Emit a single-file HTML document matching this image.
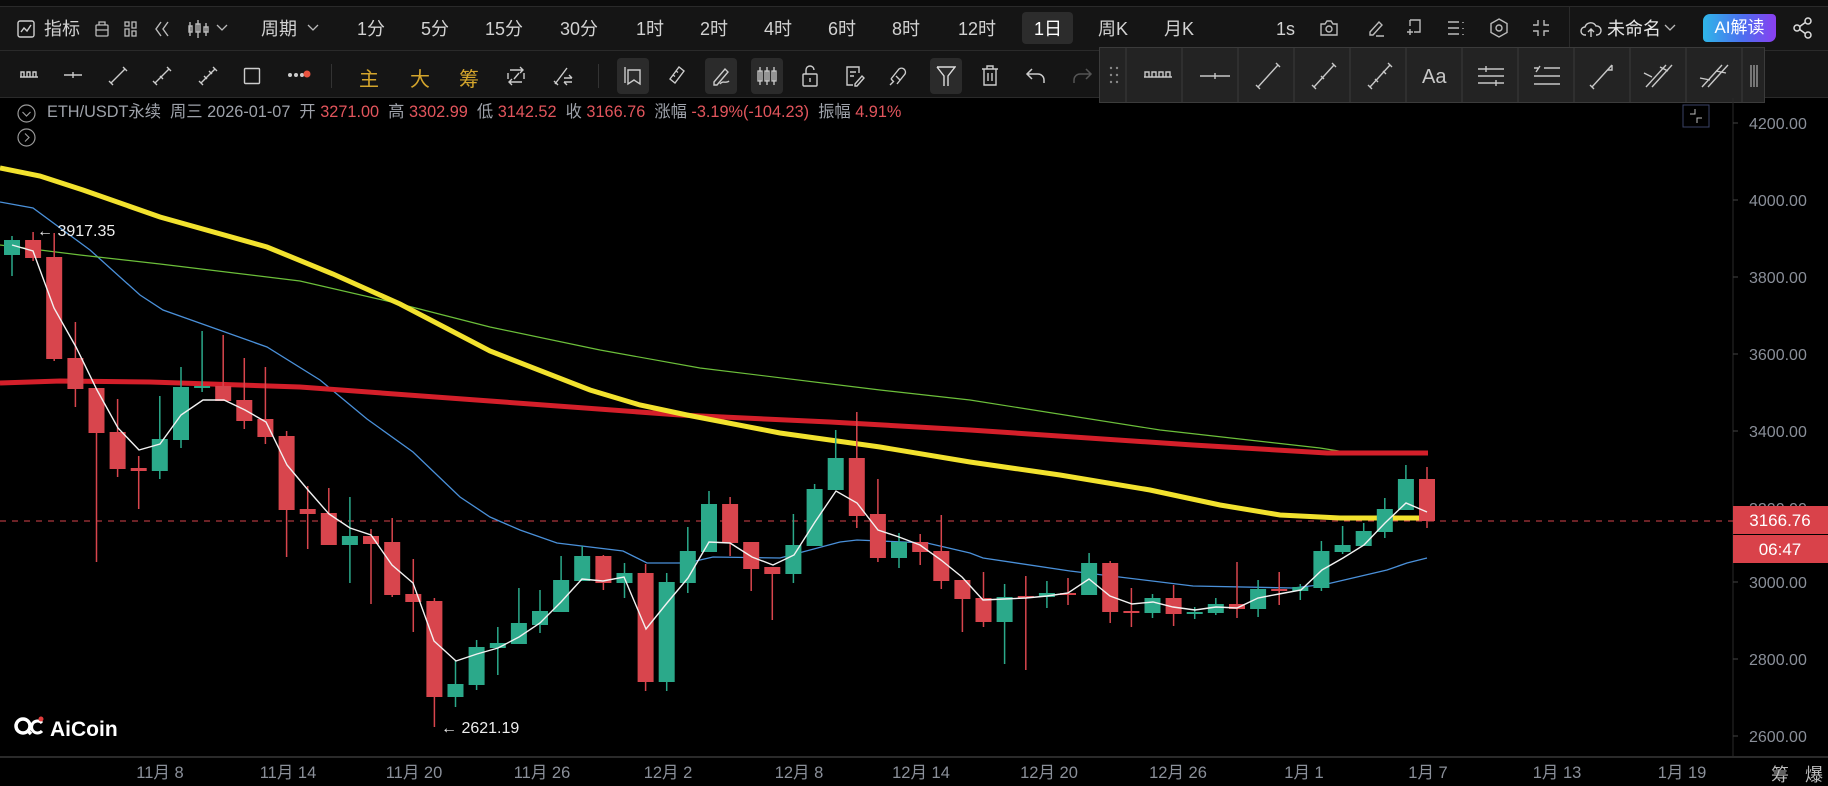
<!DOCTYPE html>
<html><head><meta charset="utf-8"><style>
*{margin:0;padding:0;box-sizing:border-box}
body{width:1828px;height:786px;background:#000;overflow:hidden;font-family:"Liberation Sans","Noto Sans CJK SC",sans-serif;position:relative;color:#d6d6d6}
.a{position:absolute;white-space:nowrap}
.t1{top:17px;font-size:18px;color:#d2d2d2;line-height:24px}
.ic{position:absolute}
</style></head><body>
<div class="a" style="left:0;top:0;width:1828px;height:6px;background:#0c0c0c"></div>
<div class="a" style="left:0;top:6px;width:1828px;height:91px;background:#151515;border-top:1px solid #2a2a2a"></div>
<div class="a" style="left:0;top:50px;width:1828px;height:1px;background:#2a2a2a"></div>
<div class="a" style="left:0;top:97px;width:1828px;height:1px;background:#2a2a2a"></div>

<svg class="ic" style="left:17px;top:20px" width="18" height="18" viewBox="0 0 18 18" fill="none" stroke="#cfcfcf" stroke-width="1.4"><rect x="1" y="1" width="16" height="16" rx="2"/><path d="M4 12l3-4 3 3 4-6"/></svg>
<span class="a t1" style="left:44px">指标</span>
<svg class="ic" style="left:94px;top:20px" width="16" height="18" viewBox="0 0 16 18" fill="none" stroke="#bbb" stroke-width="1.3"><rect x="2" y="5" width="12" height="11" rx="1"/><path d="M2 10h12M5 5V2h6v3"/></svg>
<svg class="ic" style="left:124px;top:21px" width="14" height="16" viewBox="0 0 14 16" fill="none" stroke="#bbb" stroke-width="1.3"><rect x="1" y="1" width="4" height="4"/><rect x="8" y="1" width="4" height="6"/><rect x="1" y="8" width="4" height="7"/><rect x="8" y="10" width="4" height="5"/></svg>
<svg class="ic" style="left:153px;top:20px" width="18" height="18" viewBox="0 0 18 18" fill="none" stroke="#bbb" stroke-width="1.4"><path d="M8 2L3 9l5 7M15 2l-5 7 5 7"/></svg>
<svg class="ic" style="left:187px;top:19px" width="22" height="20" viewBox="0 0 22 20" fill="none" stroke="#bbb" stroke-width="1.4"><path d="M3 3v14M2 7h3v6H2zM11 1v18M9 5h4v8H9zM19 4v13M17 8h4v5h-4z"/></svg>
<svg class="ic" style="left:216px;top:24px" width="12" height="8" viewBox="0 0 12 8" fill="none" stroke="#bbb" stroke-width="1.3"><path d="M1 1l5 5 5-5"/></svg>
<span class="a t1" style="left:261px">周期</span>
<svg class="ic" style="left:307px;top:24px" width="12" height="8" viewBox="0 0 12 8" fill="none" stroke="#bbb" stroke-width="1.3"><path d="M1 1l5 5 5-5"/></svg>
<span class="a t1" style="left:357px">1分</span>
<span class="a t1" style="left:421px">5分</span>
<span class="a t1" style="left:485px">15分</span>
<span class="a t1" style="left:560px">30分</span>
<span class="a t1" style="left:636px">1时</span>
<span class="a t1" style="left:700px">2时</span>
<span class="a t1" style="left:764px">4时</span>
<span class="a t1" style="left:828px">6时</span>
<span class="a t1" style="left:892px">8时</span>
<span class="a t1" style="left:958px">12时</span>
<div class="a" style="left:1022px;top:12px;width:51px;height:32px;background:#2c2c2c;border-radius:4px"></div>
<span class="a t1" style="left:1034px;color:#fff">1日</span>
<span class="a t1" style="left:1098px">周K</span>
<span class="a t1" style="left:1164px">月K</span>
<span class="a t1" style="left:1276px">1s</span>
<svg class="ic" style="left:1319px;top:18px" width="20" height="20" viewBox="0 0 20 20" fill="none" stroke="#bbb" stroke-width="1.4"><path d="M2 6h4l2-3h4l2 3h4v11H2z"/><circle cx="10" cy="11" r="3"/></svg>
<svg class="ic" style="left:1366px;top:18px" width="20" height="20" viewBox="0 0 20 20" fill="none" stroke="#bbb" stroke-width="1.4"><path d="M4 14l9-10 3 3-9 10H4zM10 18h8"/></svg>
<svg class="ic" style="left:1405px;top:18px" width="18" height="20" viewBox="0 0 18 20" fill="none" stroke="#bbb" stroke-width="1.4"><path d="M5 2h10v12H9M5 2v6M2 14h6M5 11v6"/></svg>
<svg class="ic" style="left:1447px;top:20px" width="18" height="16" viewBox="0 0 18 16" fill="none" stroke="#bbb" stroke-width="1.4"><path d="M1 2h11M1 8h11M1 14h11M16 2v1M16 8v1M16 14v1"/></svg>
<svg class="ic" style="left:1489px;top:18px" width="20" height="20" viewBox="0 0 20 20" fill="none" stroke="#bbb" stroke-width="1.4"><path d="M10 1l8 4.5v9L10 19l-8-4.5v-9z"/><circle cx="10" cy="10" r="3"/></svg>
<svg class="ic" style="left:1532px;top:19px" width="18" height="18" viewBox="0 0 18 18" fill="none" stroke="#bbb" stroke-width="1.4"><path d="M6 1v5H1M12 1v5h5M6 17v-5H1M12 17v-5h5"/></svg>
<div class="a" style="left:1569px;top:6px;width:1px;height:44px;background:#2a2a2a"></div>
<svg class="ic" style="left:1580px;top:19px" width="22" height="20" viewBox="0 0 22 20" fill="none" stroke="#ccc" stroke-width="1.4"><path d="M6 16H5a4 4 0 010-8 6 6 0 0111-1 4.5 4.5 0 011 9h-1M11 18v-8M8 13l3-3 3 3"/></svg>
<span class="a t1" style="left:1607px;color:#e6e6e6">未命名</span>
<svg class="ic" style="left:1664px;top:24px" width="12" height="8" viewBox="0 0 12 8" fill="none" stroke="#bbb" stroke-width="1.3"><path d="M1 1l5 5 5-5"/></svg>
<div class="a" style="left:1703px;top:14px;width:73px;height:28px;border-radius:7px 4px 7px 4px;background:linear-gradient(90deg,#2fb6e8,#4d6ef0 55%,#8a3ff0);color:#fff;font-size:17px;line-height:28px;text-align:center">AI解读</div>
<svg class="ic" style="left:1793px;top:17px" width="20" height="22" viewBox="0 0 20 22" fill="none" stroke="#ddd" stroke-width="1.5"><circle cx="15" cy="4" r="3"/><circle cx="4" cy="11" r="3"/><circle cx="15" cy="18" r="3"/><path d="M6.6 9.6l5.8-4.2M6.6 12.4l5.8 4.2"/></svg>

<svg class="ic" style="left:19px;top:68px" width="20" height="14" viewBox="0 0 20 14" fill="none" stroke="#ccc" stroke-width="1.4"><path d="M1 9h18M2 9V4h3v5M8 9V4h3v5M14 9V4h3v5"/></svg>
<svg class="ic" style="left:63px;top:68px" width="20" height="14" viewBox="0 0 20 14" fill="none" stroke="#ccc" stroke-width="1.4"><path d="M1 7h18M10 4v6"/></svg>
<svg class="ic" style="left:108px;top:66px" width="20" height="20" viewBox="0 0 20 20" fill="none" stroke="#ccc" stroke-width="1.4"><path d="M3 17L17 3M1 15l4 4M15 1l4 4"/></svg>
<svg class="ic" style="left:152px;top:66px" width="20" height="20" viewBox="0 0 20 20" fill="none" stroke="#ccc" stroke-width="1.4"><path d="M3 17L17 3M1 15l4 4M8 10l3 3M15 1l4 4"/></svg>
<svg class="ic" style="left:198px;top:66px" width="20" height="20" viewBox="0 0 20 20" fill="none" stroke="#ccc" stroke-width="1.4"><path d="M3 17L17 3M1 15l4 4M6 10l3 3M11 5l3 3M15 1l4 4"/></svg>
<svg class="ic" style="left:243px;top:67px" width="18" height="18" viewBox="0 0 18 18" fill="none" stroke="#ccc" stroke-width="1.4"><rect x="1.5" y="1.5" width="15" height="15" rx="1"/></svg>
<svg class="ic" style="left:287px;top:70px" width="24" height="10" viewBox="0 0 24 10"><circle cx="3" cy="5" r="2" fill="#ccc"/><circle cx="9" cy="5" r="2" fill="#ccc"/><circle cx="15" cy="5" r="2" fill="#ccc"/><circle cx="20" cy="4" r="3.5" fill="#e8533f"/></svg>
<div class="a" style="left:331px;top:64px;width:1px;height:24px;background:#333"></div>
<span class="a" style="left:359px;top:63px;font-size:20px;color:#d4a52c">主</span>
<span class="a" style="left:410px;top:63px;font-size:20px;color:#d4a52c">大</span>
<span class="a" style="left:459px;top:63px;font-size:20px;color:#d4a52c">筹</span>
<svg class="ic" style="left:506px;top:65px" width="20" height="22" viewBox="0 0 20 22" fill="none" stroke="#ccc" stroke-width="1.4"><path d="M4 5h13M14 2l3 3-3 3M16 17H3M6 14l-3 3 3 3M2 8v6M18 8v6M8 14l5-6"/></svg>
<svg class="ic" style="left:553px;top:65px" width="20" height="22" viewBox="0 0 20 22" fill="none" stroke="#ccc" stroke-width="1.4"><path d="M2 19L14 3M1 16l4 4M11 13h8M16 10l3 3M19 17h-8M14 20l-3-3"/></svg>
<div class="a" style="left:598px;top:64px;width:1px;height:24px;background:#333"></div>
<div class="a" style="left:617px;top:58px;width:32px;height:36px;background:#2b2b2b;border-radius:4px"></div>
<svg class="ic" style="left:624px;top:66px" width="18" height="20" viewBox="0 0 18 20" fill="none" stroke="#ccc" stroke-width="1.4"><path d="M1 1v16M4 4h12v14l-6-4-6 4z"/></svg>
<svg class="ic" style="left:666px;top:65px" width="20" height="22" viewBox="0 0 20 22" fill="none" stroke="#ccc" stroke-width="1.4"><path d="M4 14L13 2l5 4-9 12-5-4zM7 10l2 1.5M10 6l2 1.5"/></svg>
<div class="a" style="left:705px;top:58px;width:32px;height:36px;background:#2b2b2b;border-radius:4px"></div>
<svg class="ic" style="left:711px;top:65px" width="20" height="22" viewBox="0 0 20 22" fill="none" stroke="#ccc" stroke-width="1.4"><path d="M3 17L14 4l3 3L6 20H3zM9 19c3-4 6 0 9-3"/></svg>
<div class="a" style="left:751px;top:58px;width:32px;height:36px;background:#2b2b2b;border-radius:4px"></div>
<svg class="ic" style="left:756px;top:66px" width="22" height="20" viewBox="0 0 22 20" fill="none" stroke="#ccc" stroke-width="1.3"><path d="M4 1v18M2 5h4v10H2zM11 1v18M9 5h4v10H9zM18 1v18M16 5h4v10h-4z"/></svg>
<svg class="ic" style="left:801px;top:65px" width="18" height="22" viewBox="0 0 18 22" fill="none" stroke="#ccc" stroke-width="1.4"><rect x="2" y="9" width="14" height="12" rx="1"/><path d="M5 9V5a4 4 0 018 0M9 13v4"/></svg>
<svg class="ic" style="left:845px;top:65px" width="20" height="22" viewBox="0 0 20 22" fill="none" stroke="#ccc" stroke-width="1.4"><path d="M14 8V2H2v18h6M5 7h6M5 11h4M10 19l7-8 2 2-7 8h-2z"/></svg>
<svg class="ic" style="left:888px;top:65px" width="20" height="22" viewBox="0 0 20 22" fill="none" stroke="#ccc" stroke-width="1.4"><path d="M3 14l8-10a4 4 0 016 5l-8 10M6 17l-3-3M8 11l4 4M2 20l3-3"/></svg>
<div class="a" style="left:930px;top:58px;width:32px;height:36px;background:#2b2b2b;border-radius:4px"></div>
<svg class="ic" style="left:936px;top:65px" width="20" height="22" viewBox="0 0 20 22" fill="none" stroke="#ddd" stroke-width="1.4"><path d="M1 2h18l-7 9v10M8 21V11L1 2"/></svg>
<svg class="ic" style="left:981px;top:65px" width="18" height="22" viewBox="0 0 18 22" fill="none" stroke="#ccc" stroke-width="1.4"><path d="M1 4h16M6 4V1h6v3M3 4v16h12V4M7 8v8M11 8v8"/></svg>
<svg class="ic" style="left:1025px;top:67px" width="22" height="18" viewBox="0 0 22 18" fill="none" stroke="#ccc" stroke-width="1.5"><path d="M7 2L2 7l5 5M2 7h11a6 6 0 016 6v3"/></svg>
<svg class="ic" style="left:1071px;top:67px" width="22" height="18" viewBox="0 0 22 18" fill="none" stroke="#555" stroke-width="1.5"><path d="M15 2l5 5-5 5M20 7H9a6 6 0 00-6 6v3"/></svg>

<div class="a" style="left:1099px;top:47px;width:666px;height:56px;background:#232323;border:1px solid #3b3b3b"></div>
<svg class="ic" style="left:1099px;top:47px" width="666" height="56" viewBox="0 0 666 56" fill="none" stroke="#c8c8c8" stroke-width="1.4">
<g fill="#888" stroke="none"><circle cx="12" cy="21" r="1.2"/><circle cx="18" cy="21" r="1.2"/><circle cx="12" cy="28" r="1.2"/><circle cx="18" cy="28" r="1.2"/><circle cx="12" cy="35" r="1.2"/><circle cx="18" cy="35" r="1.2"/></g>
<g stroke="#3b3b3b" stroke-width="1"><path d="M27 0v56M83 0v56M139 0v56M195 0v56M251 0v56M307 0v56M363 0v56M419 0v56M475 0v56M531 0v56M587 0v56M643 0v56"/></g>
<path d="M45 30h28M46 30v-5h4v5M53 30v-5h4v5M60 30v-5h4v5M67 30v-5h4v5"/>
<path d="M101 29h30M116 26v6"/>
<path d="M159 40l20-22M157 38l4 4M177 16l4 4"/>
<path d="M215 40l20-22M213 38l4 4M222 29l3 3M233 16l4 4"/>
<path d="M271 40l20-22M269 38l4 4M276 32l3 3M284 24l3 3M289 16l4 4"/>
<text x="323" y="36" fill="#c8c8c8" stroke="none" font-size="20" font-family="Liberation Sans">Aa</text>
<path d="M379 22h26M379 29h26M379 36h26M387 19v6M397 33v6"/>
<path d="M435 21h4M445 21h16M435 29h26M435 37h26M437 25l4-6"/>
<path d="M493 40l20-22M491 38l4 4M513 18v5h-5"/>
<path d="M547 40l20-22M553 40l20-22M545 26l8 4M561 20l8 4"/>
<path d="M603 40l20-22M609 40l20-22M601 31l10 2M617 24l10 2"/>
<path d="M652 18v22M655 18v22M658 18v22" stroke="#999"/>
</svg>

<svg class="ic" style="left:17px;top:104px" width="19" height="19" viewBox="0 0 19 19" fill="none" stroke="#999" stroke-width="1.2"><circle cx="9.5" cy="9.5" r="8.5"/><path d="M5.5 8l4 4 4-4"/></svg>
<svg class="ic" style="left:17px;top:128px" width="19" height="19" viewBox="0 0 19 19" fill="none" stroke="#999" stroke-width="1.2"><circle cx="9.5" cy="9.5" r="8.5"/><path d="M8 5.5l4 4-4 4"/></svg>
<div class="a" style="left:47px;top:102px;font-size:16.3px;line-height:21px;color:#9ea2aa">ETH/USDT永续&nbsp; 周三 2026-01-07&nbsp; 开 <span style="color:#e2555c">3271.00</span>&nbsp; 高 <span style="color:#e2555c">3302.99</span>&nbsp; 低 <span style="color:#e2555c">3142.52</span>&nbsp; 收 <span style="color:#e2555c">3166.76</span>&nbsp; 涨幅 <span style="color:#e2555c">-3.19%(-104.23)</span>&nbsp; 振幅 <span style="color:#e2555c">4.91%</span></div>

<svg class="ic" style="left:0;top:0" width="1828" height="786" viewBox="0 0 1828 786">
<rect x="1683" y="105" width="26" height="22" fill="none" stroke="#3a4266" stroke-width="1"/>
<path d="M1690 114h5v-5M1702 118h-5v5" fill="none" stroke="#bbb" stroke-width="1"/>
<line x1="1733" y1="98" x2="1733" y2="757" stroke="#2a2a2a"/>
<line x1="0" y1="757" x2="1828" y2="757" stroke="#2a2a2a" stroke-width="2"/>
<g fill="#8a8f99" font-size="16" font-family="Liberation Sans">
<text x="1749" y="129">4200.00</text><text x="1749" y="206">4000.00</text><text x="1749" y="283">3800.00</text><text x="1749" y="360">3600.00</text><text x="1749" y="437">3400.00</text><text x="1749" y="514">3200.00</text><text x="1749" y="588">3000.00</text><text x="1749" y="665">2800.00</text><text x="1749" y="742">2600.00</text>
</g>
<g stroke="#444"><path d="M1733 123h5M1733 200h5M1733 277h5M1733 354h5M1733 431h5M1733 508h5M1733 582h5M1733 659h5M1733 736h5"/></g>
<g fill="#8a8f99" font-size="16.5" font-family="Liberation Sans,Noto Sans CJK SC" text-anchor="middle">
<text x="160" y="778">11月 8</text><text x="288" y="778">11月 14</text><text x="414" y="778">11月 20</text><text x="542" y="778">11月 26</text><text x="668" y="778">12月 2</text><text x="799" y="778">12月 8</text><text x="921" y="778">12月 14</text><text x="1049" y="778">12月 20</text><text x="1178" y="778">12月 26</text><text x="1304" y="778">1月 1</text><text x="1428" y="778">1月 7</text><text x="1557" y="778">1月 13</text><text x="1682" y="778">1月 19</text>
</g>
<text x="1771" y="781" fill="#bbb" font-size="18" font-family="Noto Sans CJK SC,sans-serif">筹</text>
<text x="1805" y="781" fill="#bbb" font-size="18" font-family="Noto Sans CJK SC,sans-serif">爆</text>

<line x1="0" y1="521" x2="1733" y2="521" stroke="#d8454d" stroke-width="1" stroke-dasharray="6,6"/>

<polyline fill="none" stroke="#4a90d9" stroke-width="1.3" points="0,202 33,208 90,250 140,295 163,310 267,347 320,380 367,419 413,452 460,497 490,517 520,530 557,543 623,551 647,563 687,563 713,557 780,558 840,542 857,540 927,543 970,553 983,558 1070,571 1193,586 1293,588 1327,584 1387,570 1407,563 1427,558"/>
<polyline fill="none" stroke="#6cbf3a" stroke-width="1.2" points="0,245 80,255 160,264 300,281 400,304 490,327 600,350 700,368 880,390 970,400 1160,430 1320,448 1345,452"/>
<polyline fill="none" stroke="#d41f2a" stroke-width="5" points="0,383 60,381 150,382 300,387 490,401 680,415 830,422 970,430 1193,445 1327,453 1428,453"/>
<polyline fill="none" stroke="#f2e22e" stroke-width="5" points="0,168 40,176 83,190 160,217 267,247 333,274 400,304 490,351 590,390 640,405 687,415 780,433 880,447 970,462 1060,475 1150,490 1220,505 1280,515 1340,518 1428,518"/>

<path fill="none" stroke="#2ba98a" stroke-width="1.5" d="M12 236V276M159.8 396V479M181 367V448M202.1 331V392M349.9 497V583M455.5 661V707M476.6 640V690M497.8 627V675M518.9 588V644M540 590V633M561.1 556V612M582.2 546V581M624.5 563V598M666.7 573V691M687.8 527V593M709 491V552M793.4 514V583M814.6 484V546M835.7 430V490M899 533V568M1004.6 584V664M1046.9 581V608M1089.1 553V595M1152.5 594V618M1194.7 607V619M1215.8 598V615M1258.1 580V617M1300.3 584V600M1321.4 541V591M1342.6 526V554M1363.7 523V546M1384.8 498V538M1405.9 465V510"/>
<path fill="none" stroke="#d8454d" stroke-width="1.5" d="M33.1 232V261M54.2 233V361M75.4 322V407M96.5 388V562M117.6 399V477M138.7 456V509M223.2 335V401M244.3 358V429M265.4 367V444M286.6 431V557M307.7 486V549M328.8 488V545M371 529V604M392.2 518V597M413.3 559V632M434.4 598V727M603.4 555V590M645.6 564V691M730.1 497V556M751.2 542V591M772.3 567V620M856.8 412V528M877.9 479V562M920.2 534V565M941.3 515V589M962.4 580V632M983.5 572V627M1025.8 576V670M1068 578V605M1110.2 561V623M1131.4 588V627M1173.6 585V626M1237 562V618M1279.2 572V605M1427 467V528"/>
<g fill="#2ba98a">
<rect x="4" y="240" width="16" height="15"/><rect x="151.8" y="439" width="16" height="32"/><rect x="173" y="387" width="16" height="53"/><rect x="194.1" y="386" width="16" height="2"/><rect x="341.9" y="536" width="16" height="9"/><rect x="447.5" y="684" width="16" height="13"/><rect x="468.6" y="647" width="16" height="38"/><rect x="489.8" y="643" width="16" height="5"/><rect x="510.9" y="623" width="16" height="21"/><rect x="532" y="611" width="16" height="14"/><rect x="553.1" y="580" width="16" height="32"/><rect x="574.2" y="556" width="16" height="25"/><rect x="616.5" y="573" width="16" height="10"/><rect x="658.7" y="582" width="16" height="100"/><rect x="679.8" y="551" width="16" height="32"/><rect x="701" y="504" width="16" height="48"/><rect x="785.4" y="545" width="16" height="29"/><rect x="806.6" y="489" width="16" height="57"/><rect x="827.7" y="458" width="16" height="32"/><rect x="891" y="542" width="16" height="16"/><rect x="996.6" y="597" width="16" height="25"/><rect x="1038.9" y="593" width="16" height="4"/><rect x="1081.1" y="563" width="16" height="32"/><rect x="1144.5" y="598" width="16" height="15"/><rect x="1186.7" y="612" width="16" height="2"/><rect x="1207.8" y="604" width="16" height="9"/><rect x="1250.1" y="589" width="16" height="20"/><rect x="1292.3" y="587" width="16" height="4"/><rect x="1313.4" y="551" width="16" height="37"/><rect x="1334.6" y="545" width="16" height="7"/><rect x="1355.7" y="531" width="16" height="15"/><rect x="1376.8" y="509" width="16" height="23"/><rect x="1397.9" y="479" width="16" height="31"/>
</g>
<g fill="#d8454d">
<rect x="25.1" y="240" width="16" height="18"/><rect x="46.2" y="257" width="16" height="102"/><rect x="67.4" y="358" width="16" height="31"/><rect x="88.5" y="388" width="16" height="45"/><rect x="109.6" y="432" width="16" height="37"/><rect x="130.7" y="468" width="16" height="3"/><rect x="215.2" y="386" width="16" height="15"/><rect x="236.3" y="400" width="16" height="21"/><rect x="257.4" y="419" width="16" height="18"/><rect x="278.6" y="436" width="16" height="74"/><rect x="299.7" y="509" width="16" height="5"/><rect x="320.8" y="513" width="16" height="32"/><rect x="363" y="536" width="16" height="8"/><rect x="384.2" y="542" width="16" height="53"/><rect x="405.3" y="594" width="16" height="8"/><rect x="426.4" y="601" width="16" height="96"/><rect x="595.4" y="556" width="16" height="27"/><rect x="637.6" y="573" width="16" height="109"/><rect x="722.1" y="504" width="16" height="39"/><rect x="743.2" y="542" width="16" height="27"/><rect x="764.3" y="567" width="16" height="7"/><rect x="848.8" y="458" width="16" height="58"/><rect x="869.9" y="514" width="16" height="44"/><rect x="912.2" y="542" width="16" height="10"/><rect x="933.3" y="551" width="16" height="30"/><rect x="954.4" y="580" width="16" height="19"/><rect x="975.5" y="598" width="16" height="24"/><rect x="1017.8" y="596" width="16" height="2"/><rect x="1060" y="593" width="16" height="2"/><rect x="1102.2" y="563" width="16" height="49"/><rect x="1123.4" y="611" width="16" height="2"/><rect x="1165.6" y="598" width="16" height="16"/><rect x="1229" y="604" width="16" height="5"/><rect x="1271.2" y="589" width="16" height="2"/><rect x="1419" y="479" width="16" height="42"/>
</g>
<polyline fill="none" stroke="#f2f2f2" stroke-width="1.4" points="12,245 33,251 54,308 76,347 97,390 118,428 139,450 160,444 181,415 203,400 224,400 245,410 266,422 287,465 308,490 329,514 350,528 371,535 392,565 413,583 434,641 456,661 477,654 498,648 519,637 540,623 561,602 582,579 603,581 624,577 646,629 667,603 688,578 709,542 730,543 752,557 773,565 794,555 815,522 836,491 857,503 878,530 899,537 920,545 941,560 962,577 983,600 1004,599 1026,598 1047,596 1068,593 1089,579 1110,596 1132,604 1153,602 1173,607 1195,610 1216,607 1237,608 1258,598 1279,594 1301,590 1322,570 1343,558 1364,545 1385,523 1406,503 1427,512"/>

<g fill="#eee" font-size="16" font-family="Liberation Sans">
<text x="37" y="236">← 3917.35</text>
<text x="441" y="733">← 2621.19</text>
</g>
<rect x="1733" y="506" width="95" height="28" fill="#d9424a"/>
<text x="1780" y="526" fill="#fff" font-size="17" font-family="Liberation Sans" text-anchor="middle">3166.76</text>
<rect x="1733" y="535" width="95" height="28" fill="#d9424a"/>
<text x="1780" y="555" fill="#fff" font-size="17" font-family="Liberation Sans" text-anchor="middle">06:47</text>
<g transform="translate(15,716)">
<circle cx="8" cy="10" r="7" fill="none" stroke="#fff" stroke-width="3.5"/>
<path d="M12 14l4 4" stroke="#fff" stroke-width="3.5"/>
<path d="M27 7a6 6 0 100 8" fill="none" stroke="#fff" stroke-width="3"/>
<circle cx="26" cy="3" r="2.5" fill="#e23c3c"/>
<text x="35" y="20" fill="#fff" font-size="21" font-weight="bold" font-family="Liberation Sans">AiCoin</text>
</g>
</svg>
</body></html>
